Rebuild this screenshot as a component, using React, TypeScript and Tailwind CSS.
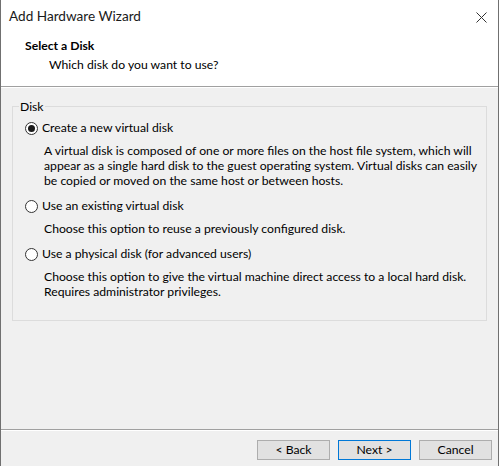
import { FC } from "react";

type DiskOption = {
  label: string;
  lines: string[];
  checked?: boolean;
};

const options: DiskOption[] = [
  {
    label: "Create a new virtual disk",
    checked: true,
    lines: [
      "A virtual disk is composed of one or more files on the host file system, which will",
      "appear as a single hard disk to the guest operating system. Virtual disks can easily",
      "be copied or moved on the same host or between hosts.",
    ],
  },
  {
    label: "Use an existing virtual disk",
    lines: ["Choose this option to reuse a previously configured disk."],
  },
  {
    label: "Use a physical disk (for advanced users)",
    lines: [
      "Choose this option to give the virtual machine direct access to a local hard disk.",
      "Requires administrator privileges.",
    ],
  },
];

const Radio: FC<{ checked?: boolean }> = ({ checked }) => (
  <span className="flex h-[13px] w-[13px] shrink-0 items-center justify-center rounded-full border border-[#333333] bg-white">
    {checked && <span className="h-[7px] w-[7px] rounded-full bg-[#1a1a1a]" />}
  </span>
);

const WizardButton: FC<{ label: string; primary?: boolean }> = ({ label, primary }) => (
  <button
    className={
      "flex h-[20px] w-[73px] items-center justify-center border bg-[#e1e1e1] text-[12.2px] text-black " +
      (primary ? "border-[#0078d7]" : "border-[#adadad]")
    }
  >
    {label}
  </button>
);

const App: FC = () => {
  return (
    <div
      className="flex h-[466px] w-[499px] flex-col border-l border-r border-[#707070] bg-[#f0f0f0] text-[12.2px] text-black"
      style={{ fontFamily: 'Lato, "Noto Sans", sans-serif' }}
    >
      {/* title bar + page header share the white top area */}
      <div className="flex h-[86px] flex-col bg-white">
        <div className="flex h-[34px] items-center justify-between pl-[8px] pr-[11px]">
          <span className="text-[13.6px] leading-none text-[#1a1a1a]">Add Hardware Wizard</span>
          <svg width="11" height="11" viewBox="0 0 11 11" className="text-[#333]">
            <path d="M0.5 0.5 L10.5 10.5 M10.5 0.5 L0.5 10.5" stroke="currentColor" strokeWidth="1" />
          </svg>
        </div>
        <div className="pl-[24px] pt-[4px] leading-[15px]">
          <div className="font-bold">Select a Disk</div>
          <div className="mt-[4px] pl-[24px]">Which disk do you want to use?</div>
        </div>
      </div>
      <div className="h-px bg-[#a0a0a0]" />
      <div className="h-px bg-white" />

      <div className="flex flex-1 flex-col px-[11px] pt-[11px]">
        <fieldset className="h-[222px] border border-[#dcdcdc] pb-[8px] pl-[12px] pr-[7px]">
          <legend className="ml-[-6px] px-[1px] leading-[15px]">Disk</legend>
          <div className="flex flex-col gap-[10px] pt-[6px]">
            {options.map((opt) => (
              <div key={opt.label} className="flex flex-col">
                <label className="flex h-[16px] items-center gap-[4px] whitespace-nowrap">
                  <Radio checked={opt.checked} />
                  <span>{opt.label}</span>
                </label>
                <div className="mt-[7px] whitespace-nowrap pl-[19px] leading-[15px]">
                  {opt.lines.map((l) => (
                    <div key={l}>{l}</div>
                  ))}
                </div>
              </div>
            ))}
          </div>
        </fieldset>
      </div>

      <div className="h-px bg-[#a0a0a0]" />
      <div className="h-px bg-white" />
      <div className="flex h-[35px] items-start justify-end gap-[8px] pr-[6px] pt-[9px]">
        <WizardButton label="< Back" />
        <WizardButton label="Next >" primary />
        <WizardButton label="Cancel" />
      </div>
    </div>
  );
};

export default App;
